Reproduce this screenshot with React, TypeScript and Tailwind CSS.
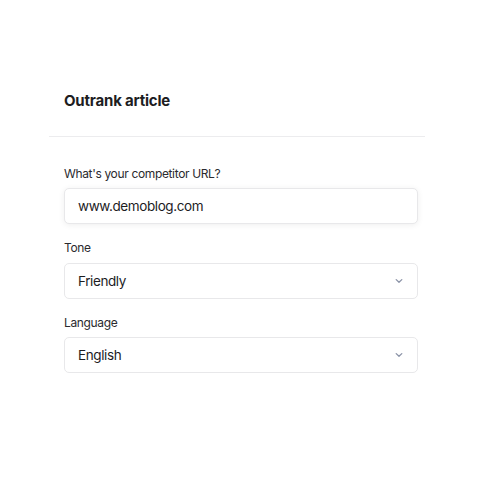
import React from "react";

function Chevron() {
  return (
    <svg width="10" height="10" viewBox="0 0 10 10" fill="none" className="text-[#8b93a7]">
      <path d="M2.2 3.6L5 6.3L7.8 3.6" stroke="currentColor" strokeWidth="1.3" strokeLinecap="round" strokeLinejoin="round" />
    </svg>
  );
}

function Select({ value }: { value: string }) {
  return (
    <div className="h-[36px] w-[354px] rounded-[5px] border border-[#e8e8ea] bg-white flex items-center justify-between pl-[13px] pr-[13px]">
      <span className="text-[13.5px] tracking-[-0.4px] text-[#1d1d1f]">{value}</span>
      <Chevron />
    </div>
  );
}

export default function App() {
  return (
    <div className="w-[480px] h-[480px] bg-white" style={{ fontFamily: "Inter, 'Noto Sans', sans-serif" }}>
      <div className="pt-[91px]">
        <div className="pl-[64px] text-[15px] font-bold tracking-[-0.2px] text-[#1d1d1f] leading-[20px]">Outrank article</div>
        <div className="mt-[25px] ml-[49px] w-[376px] h-px bg-[#ececee]" />
        <div className="pl-[64px] pt-[29px] flex flex-col">
          <div className="text-[12px] tracking-[-0.35px] text-[#2a2a2e] leading-[16px]">What's your competitor URL?</div>
          <div className="mt-[6px] h-[36px] w-[354px] rounded-[5px] border border-[#e8e8ea] bg-white flex items-center pl-[13px] shadow-[0_1px_6px_rgba(0,0,0,0.07)]">
            <span className="text-[13.5px] tracking-[-0.4px] text-[#1d1d1f]">www.demoblog.com</span>
          </div>
          <div className="mt-[16px] text-[12px] tracking-[-0.35px] text-[#2a2a2e] leading-[16px]">Tone</div>
          <div className="mt-[7px]">
            <Select value="Friendly" />
          </div>
          <div className="mt-[16px] text-[12px] tracking-[-0.35px] text-[#2a2a2e] leading-[16px]">Language</div>
          <div className="mt-[6px]">
            <Select value="English" />
          </div>
        </div>
      </div>
    </div>
  );
}
